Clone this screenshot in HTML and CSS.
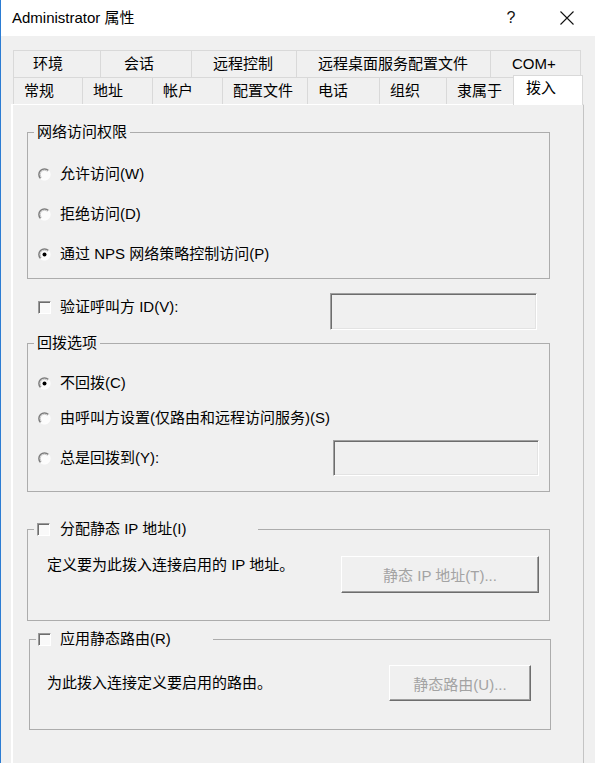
FILE: index.html
```html
<!DOCTYPE html>
<html lang="zh-CN">
<head>
<meta charset="utf-8">
<title>Administrator 属性</title>
<link rel="stylesheet" href="styles.css">
</head>
<body>
<svg class="defs" width="0" height="0" aria-hidden="true">
  <symbol id="rb" viewBox="0 0 13 13">
    <circle cx="6.5" cy="6.5" r="5.6" fill="#fcfcfc"/>
    <path d="M2.54 10.46 A5.6 5.6 0 0 1 10.46 2.54" fill="none" stroke="#7c7c7c" stroke-width="1.5"/>
    <path d="M3.5 9.5 A4.2 4.2 0 0 1 9.5 3.5" fill="none" stroke="#c2c2c2" stroke-width="0.9"/>
    <path d="M10.46 2.54 A5.6 5.6 0 0 1 2.54 10.46" fill="none" stroke="#ffffff" stroke-width="1"/>
  </symbol>
  <symbol id="rbs" viewBox="0 0 13 13">
    <circle cx="6.5" cy="6.5" r="5.6" fill="#fcfcfc"/>
    <path d="M2.54 10.46 A5.6 5.6 0 0 1 10.46 2.54" fill="none" stroke="#7c7c7c" stroke-width="1.5"/>
    <path d="M3.5 9.5 A4.2 4.2 0 0 1 9.5 3.5" fill="none" stroke="#c2c2c2" stroke-width="0.9"/>
    <path d="M10.46 2.54 A5.6 5.6 0 0 1 2.54 10.46" fill="none" stroke="#ffffff" stroke-width="1"/>
    <circle cx="6.5" cy="6.5" r="2" fill="#000"/>
  </symbol>
</svg>
<div class="window">
  <header class="titlebar">
    <span class="title">Administrator 属性</span>
    <span class="help">?</span>
    <svg class="close" width="14" height="14" viewBox="0 0 14 14"><path d="M0.5 0.5 L13.5 13.5 M13.5 0.5 L0.5 13.5" stroke="#111" stroke-width="1.1" fill="none"/></svg>
  </header>
  <div class="client">
    <div class="sheet">
      <div class="tabs">
        <div class="tabrow">
          <div class="tab b1">环境</div>
          <div class="tab b2">会话</div>
          <div class="tab b3">远程控制</div>
          <div class="tab b4">远程桌面服务配置文件</div>
          <div class="tab b5 last">COM+</div>
        </div>
        <div class="tabrow">
          <div class="tab f1">常规</div>
          <div class="tab f2">地址</div>
          <div class="tab f3">帐户</div>
          <div class="tab f4">配置文件</div>
          <div class="tab f5">电话</div>
          <div class="tab f6">组织</div>
          <div class="tab f7">隶属于</div>
          <div class="tab sel">拨入</div>
        </div>
      </div>
      <div class="panel">
        <fieldset class="group g1">
          <legend>网络访问权限</legend>
          <div class="opt"><svg class="radio"><use href="#rb"/></svg><span>允许访问(W)</span></div>
          <div class="opt"><svg class="radio"><use href="#rb"/></svg><span>拒绝访问(D)</span></div>
          <div class="opt"><svg class="radio"><use href="#rbs"/></svg><span>通过 NPS 网络策略控制访问(P)</span></div>
        </fieldset>

        <div class="verify">
          <div class="label"><span class="check"></span><span>验证呼叫方 ID(V):</span></div>
          <div class="textbox tb-verify"></div>
        </div>

        <fieldset class="group g2">
          <legend>回拨选项</legend>
          <div class="opt"><svg class="radio"><use href="#rbs"/></svg><span>不回拨(C)</span></div>
          <div class="opt short"><svg class="radio"><use href="#rb"/></svg><span>由呼叫方设置(仅路由和远程访问服务)(S)</span></div>
          <div class="opt withbox"><svg class="radio"><use href="#rb"/></svg><span>总是回拨到(Y):</span><div class="textbox tb-callback"></div></div>
        </fieldset>

        <fieldset class="group g3">
          <legend class="chklegend"><span class="check"></span><span>分配静态 IP 地址(I)</span></legend>
          <div class="descrow">
            <span class="desc">定义要为此拨入连接启用的 IP 地址。</span>
            <div class="btn btn-ip">静态 IP 地址(T)...</div>
          </div>
        </fieldset>

        <fieldset class="group g4">
          <legend class="chklegend"><span class="check"></span><span>应用静态路由(R)</span></legend>
          <div class="descrow">
            <span class="desc">为此拨入连接定义要启用的路由。</span>
            <div class="btn btn-route">静态路由(U)...</div>
          </div>
        </fieldset>
      </div>
    </div>
  </div>
</div>
</body>
</html>
```
FILE: styles.css
```css
body {
  margin: 0;
}

.defs {
  display: block;
  width: 0;
  height: 0;
  overflow: hidden;
}

.window {
  width: 595px;
  height: 763px;
  box-sizing: border-box;
  border-left: 1px solid #2b7cd3;
  background: #f0f0f0;
  overflow: hidden;
  font-family: "Liberation Sans", "Noto Sans CJK SC", sans-serif;
  font-size: 15px;
  color: #000;
}

/* title bar */
.titlebar {
  height: 36px;
  background: #fff;
  display: flex;
  align-items: center;
  padding-left: 11px;
}

.title {
  line-height: 20px;
}

.help {
  margin-left: auto;
  width: 16px;
  text-align: center;
  font-size: 16px;
  line-height: 20px;
  color: #111;
}

.close {
  display: block;
  margin-left: 41px;
  margin-right: 21px;
}

/* tab sheet */
.client {
  padding-top: 14px;
}

.sheet {
  margin-left: 10px;
  width: 573px;
}

.tabs {
  padding-left: 2px;
}

.tabrow {
  display: flex;
  height: 27px;
}

.tab {
  box-sizing: border-box;
  height: 27px;
  border-top: 1px solid #d9d9d9;
  border-left: 1px solid #d9d9d9;
  line-height: 26px;
  white-space: nowrap;
  padding-left: 10px;
  flex: none;
}

.tab.last {
  border-right: 1px solid #d9d9d9;
}

.b1 { width: 87px; padding-left: 19px; }
.b2 { width: 91px; padding-left: 23px; }
.b3 { width: 105px; padding-left: 21px; }
.b4 { width: 194px; padding-left: 21px; }
.b5 { width: 91px; padding-left: 21px; }

.f1 { width: 69px; }
.f2 { width: 70px; }
.f3 { width: 70px; }
.f4 { width: 85px; }
.f5 { width: 72px; }
.f6 { width: 67px; }
.f7 { width: 67px; }

.tab.sel {
  width: 70px;
  height: 30px;
  margin-top: -2px;
  margin-bottom: -1px;
  position: relative;
  z-index: 1;
  background: #fff;
  line-height: 24px;
  padding-left: 12px;
  border-right: 1px solid #d9d9d9;
}

.panel {
  box-sizing: border-box;
  width: 573px;
  height: 700px;
  border-top: 1px solid #fff;
  border-left: 2px solid #fff;
  border-right: 1px solid #c4c4c4;
  padding-top: 17px;
}

/* group boxes */
.group {
  box-sizing: border-box;
  width: 523px;
  margin: 0 0 0 14px;
  padding: 0;
  min-inline-size: 0;
  border: 1px solid #acacac;
}

.group legend {
  margin-left: 6px;
  padding: 0 3px;
  line-height: 20px;
}

.g1 {
  padding: 12px 0 4px;
}

.g2 {
  margin-top: 3px;
  padding: 10px 0 15px;
}

.g3 {
  margin-top: 27px;
  padding: 17px 0 27px;
}

.g4 {
  margin-top: 8px;
  margin-left: 16px;
  width: 522px;
  padding: 16px 0 28px;
}

.group .chklegend {
  box-sizing: border-box;
  display: flex;
  align-items: center;
  width: 224px;
  padding: 0 0 0 3px;
}

.g3 .chklegend .check {
  margin-right: 10px;
}

.group.g4 .chklegend {
  width: 177px;
  padding-left: 2px;
}

/* radio options */
.opt {
  display: flex;
  align-items: center;
  height: 40px;
  padding-left: 11px;
  line-height: 20px;
}

.opt.short {
  height: 30px;
}

.opt.withbox {
  height: 36px;
  margin-top: 7px;
}

.radio {
  width: 13px;
  height: 13px;
  margin-left: -1px;
  margin-right: 9px;
  flex: none;
}

/* checkbox */
.check {
  box-sizing: border-box;
  width: 13px;
  height: 13px;
  flex: none;
  margin-right: 9px;
  border-top: 1px solid #9a9a9a;
  border-left: 1px solid #9a9a9a;
  border-right: 1px solid #fff;
  border-bottom: 1px solid #fff;
  box-shadow: inset 1px 1px 0 #6d6d6d;
  background: #f9f9f9;
}

/* caller id row */
.verify {
  display: flex;
  align-items: flex-start;
  height: 37px;
  margin-top: 14px;
  padding-left: 25px;
}

.verify .label {
  display: flex;
  align-items: center;
  margin-top: 4px;
  line-height: 20px;
}

.textbox {
  box-sizing: border-box;
  flex: none;
  margin-left: auto;
  border-top: 1px solid #a0a0a0;
  border-left: 1px solid #a0a0a0;
  border-right: 1px solid #fff;
  border-bottom: 1px solid #fff;
  box-shadow: inset 1px 1px 0 #6d6d6d, inset -1px -1px 0 #e3e3e3;
  background: #f0f0f0;
}

.tb-verify {
  width: 207px;
  height: 37px;
  margin-right: 46px;
}

.tb-callback {
  width: 206px;
  height: 36px;
  margin-right: 10px;
}

/* description + button rows */
.descrow {
  display: flex;
  align-items: flex-start;
}

.desc {
  line-height: 20px;
  white-space: nowrap;
}

.g3 .desc {
  padding-left: 19px;
  margin-top: -1px;
}

.g4 .desc {
  padding-left: 17px;
  align-self: center;
}

.btn {
  box-sizing: border-box;
  flex: none;
  display: flex;
  align-items: center;
  justify-content: center;
  margin-left: auto;
  border-top: 1px solid #fff;
  border-left: 1px solid #fff;
  border-right: 1px solid #6d6d6d;
  border-bottom: 1px solid #6d6d6d;
  box-shadow: inset -1px -1px 0 #a0a0a0;
  background: #f0f0f0;
  color: #a3a3a3;
  white-space: nowrap;
}

.btn-ip {
  width: 198px;
  height: 37px;
  margin-right: 10px;
}

.btn-route {
  width: 142px;
  height: 36px;
  margin-right: 19px;
}
```
